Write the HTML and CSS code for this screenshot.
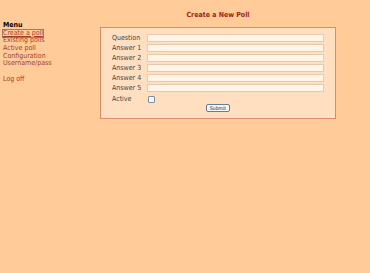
FILE: index.html
```html
<!DOCTYPE html>
<html lang="en">
<head>
    <meta charset="UTF-8">
    <title>Create a New Poll</title>
    <link rel="stylesheet" href="styles.css">
</head>
<body>
    <div class="page">
        <div class="sidebar">
            <div class="menu-title">Menu</div>
            <a href="#" class="current">Create a poll</a>
            <a href="#">Existing polls</a>
            <a href="#">Active poll</a>
            <a href="#">Configuration</a>
            <a href="#">Username/pass</a>
            <a href="#" class="logoff">Log off</a>
        </div>
        <div class="main">
            <h1>Create a New Poll</h1>
            <form class="poll-box">
                <div class="poll-grid">
                    <label>Question</label><input type="text">
                    <label>Answer 1</label><input type="text">
                    <label>Answer 2</label><input type="text">
                    <label>Answer 3</label><input type="text">
                    <label>Answer 4</label><input type="text">
                    <label>Answer 5</label><input type="text">
                    <label class="active-label">Active</label><span class="check-cell"><input type="checkbox"></span>
                </div>
                <div class="submit-row">
                    <button type="button">Submit</button>
                </div>
            </form>
        </div>
    </div>
</body>
</html>
```

FILE: styles.css
```css
body {
    margin: 0;
    background-color: #ffcc99;
    font-family: "DejaVu Sans Condensed", "DejaVu Sans", Verdana, sans-serif;
    font-size: 7px;
    color: #333;
}
.page {
    display: flex;
}
.sidebar {
    width: 97px;
    padding: 22px 0 0 3px;
    display: flex;
    flex-direction: column;
    align-items: flex-start;
}
.sidebar > * {
    height: 7.7px;
    line-height: 7.7px;
}
.menu-title {
    font-weight: bold;
    color: #000;
}
.sidebar a {
    color: #a3402a;
    text-decoration: none;
}
.sidebar a.current {
    text-decoration: underline;
    outline: 1px solid #a07868;
}
.sidebar a.logoff {
    margin-top: 8px;
}
.main {
    width: 236px;
}
h1 {
    margin: 12px 0 8px;
    font-size: 7px;
    line-height: 7px;
    text-align: center;
    color: #a81c0c;
}
.poll-box {
    margin: 0;
    background-color: #ffdfbf;
    border: 1px solid #d98b6c;
    padding: 5px 11px 6px;
}
.poll-grid {
    display: grid;
    grid-template-columns: 35px 1fr;
    grid-auto-rows: 10px;
    align-items: center;
    color: #444;
}
.poll-grid input[type="text"] {
    box-sizing: border-box;
    height: 8px;
    width: 177px;
    margin: 0;
    padding: 0;
    border: 1px solid #e8c9ab;
    background-color: #fff4e8;
}
.active-label {
    margin-top: 2px;
}
.check-cell {
    display: flex;
    align-items: center;
    margin-top: 2px;
}
.check-cell input {
    appearance: none;
    box-sizing: border-box;
    width: 7px;
    height: 7px;
    margin: 0 0 0 1px;
    border: 1px solid #7f8ea3;
    border-radius: 1px;
    background-color: #f7f7f7;
}
.submit-row {
    text-align: center;
    margin-top: 1px;
}
button {
    font-family: "DejaVu Sans Condensed", "DejaVu Sans", Verdana, sans-serif;
    font-size: 5px;
    height: 8px;
    padding: 0 3px;
    line-height: 6px;
    border: 1px solid #6a7c94;
    border-radius: 2px;
    background-color: #f4f4f4;
    color: #222;
}
```
